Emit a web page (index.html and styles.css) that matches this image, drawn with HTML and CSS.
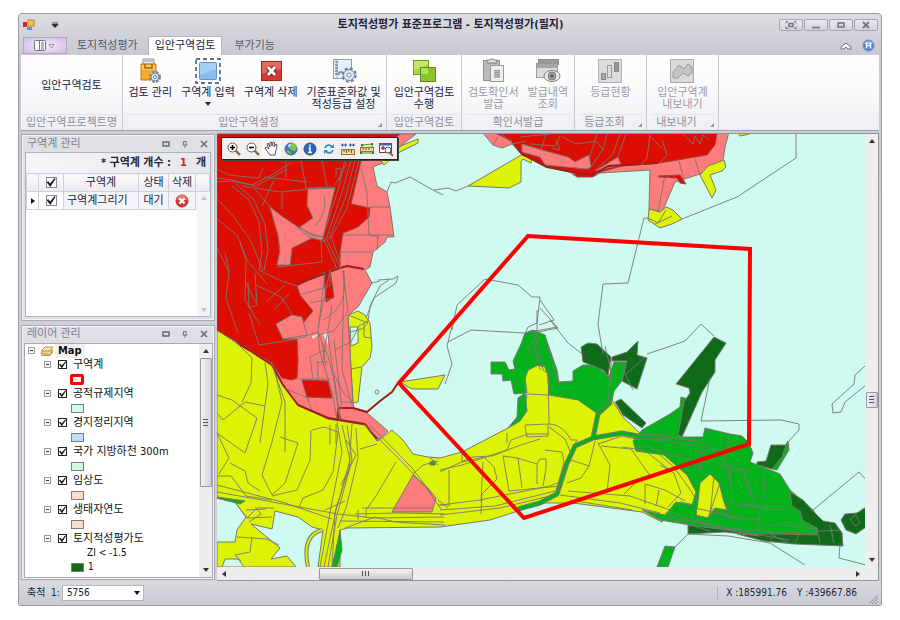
FILE: index.html
```html
<!DOCTYPE html>
<html lang="ko">
<head>
<meta charset="utf-8">
<title>토지적성평가 표준프로그램</title>
<link rel="stylesheet" href="styles.css">
</head>
<body>
<div class="window">
  <header class="titlebar">
    <div class="quick">
      <svg width="12" height="12" viewBox="0 0 12 12"><rect x="5" y="1" width="6" height="6" fill="#f6c544" stroke="#b98a1c"/><rect x="0" y="3" width="4" height="5" fill="#cf2a20"/><rect x="4" y="8" width="5" height="3" fill="#5a93dd"/></svg>
      <button class="plain" aria-label="빠른 실행 설정"><svg width="8" height="6" viewBox="0 0 8 6"><path d="M1 1h6M1 2.500h6L4 5.500z" stroke="#223" fill="#223" stroke-width=".8"/></svg></button>
    </div>
    <h1 class="title">토지적성평가 표준프로그램 - 토지적성평가(필지)</h1>
    <div class="winbuttons">
      <button aria-label="전체 화면"><svg width="12" height="8" viewBox="0 0 12 8"><path d="M1 2.500V.5h2M9 .5h2v2M11 5.500v2H9M3 7.500H1v-2" fill="none" stroke="#70737f"/><rect x="4" y="2.500" width="4" height="3" fill="none" stroke="#70737f" stroke-width="1.500"/></svg></button>
      <button aria-label="최소화"><svg width="12" height="8" viewBox="0 0 12 8"><path d="M2 6.500h8" stroke="#7c7f8b" stroke-width="2"/></svg></button>
      <button aria-label="최대화"><svg width="12" height="8" viewBox="0 0 12 8"><rect x="3" y="2" width="6" height="4" fill="none" stroke="#70737f" stroke-width="1.600"/></svg></button>
      <button aria-label="닫기"><svg width="12" height="8" viewBox="0 0 12 8"><path d="M3 1l6 6M9 1L3 7" stroke="#70737f" stroke-width="1.800"/></svg></button>
    </div>
  </header>

  <nav class="tabs">
    <button class="filebtn" aria-label="파일 메뉴"><svg width="22" height="12" viewBox="0 0 22 12"><rect x=".5" y=".5" width="11" height="10" rx="1" fill="#fafafa" stroke="#777"/><path d="M5.500 1v10M7 3h3M7 5h3M7 7h3M7 9h3" stroke="#777"/><path d="M15 4.500h5L17.500 8z" fill="#fff" stroke="#777" stroke-width=".8"/></svg></button>
    <button class="tab">토지적성평가</button>
    <button class="tab active">입안구역검토</button>
    <button class="tab">부가기능</button>
    <span class="spacer"></span>
    <button class="plain" aria-label="리본 최소화"><svg width="12" height="8" viewBox="0 0 12 8"><path d="M1 5l5-4 5 4v2H8L6 5 4 7H1z" fill="#fff" stroke="#6c6f7b"/></svg></button>
    <button class="plain help" aria-label="도움말"><svg width="13" height="13" viewBox="0 0 13 13"><circle cx="6.500" cy="6.500" r="5.500" fill="#4a7fd4" stroke="#7f8fb5"/><path d="M2 5a5 5 0 0 1 9 0z" fill="#a5c6f2"/><path d="M4.500 3.500v6M8.500 3.500v6M4.500 6.500h4" stroke="#fff" stroke-width="1.600"/></svg></button>
  </nav>

  <section class="ribbon">
    <div class="group g-project">
      <div class="items"><span class="project">입안구역검토</span></div>
      <div class="caption">입안구역프로젝트명</div>
    </div>
    <div class="group g-setting">
      <div class="items">
        <button class="tool"><svg width="24" height="26" viewBox="0 0 24 26"><path d="M5 1h11v5H5z" fill="#f2f4f8" stroke="#858b98"/><path d="M6 3h9" stroke="#858b98"/><path d="M3 6h15v16H3z" fill="#f4a929" stroke="#c07b12"/><path d="M4 7h13v5H4z" fill="#f9c763"/><path d="M7 6v4h7V6" fill="none" stroke="#a8640b" stroke-width="1.500"/><circle cx="17" cy="19" r="5" fill="#eef2f8" stroke="#77849c" stroke-width="2" stroke-dasharray="2.500 1.500"/><circle cx="17" cy="19" r="4" fill="#dfe6f0" stroke="#77849c"/><circle cx="17" cy="19" r="1.500" fill="#fff" stroke="#77849c"/></svg><span>검토 관리</span></button>
        <button class="tool"><svg width="26" height="26" viewBox="0 0 26 26"><rect x="1" y="1" width="24" height="24" fill="none" stroke="#2f4666" stroke-width="1.400" stroke-dasharray="4 3"/><rect x="4.500" y="4.500" width="17" height="17" rx="1" fill="#8bbcf0" stroke="#5f94cf"/><path d="M5 5h16v6L5 17z" fill="#a9cff7"/></svg><span>구역계 입력</span><svg class="caret" width="6" height="4" viewBox="0 0 6 4"><path d="M0 0h6L3 4z" fill="#223"/></svg></button>
        <button class="tool"><svg width="24" height="26" viewBox="0 0 24 26"><rect x="2.500" y="3.500" width="20" height="19" fill="#d2392f" stroke="#a8221b"/><path d="M3 4h19v7L3 16z" fill="#e2685d"/><path d="M9 9l7 8M16 9l-7 8" stroke="#7d1712" stroke-width="5"/><path d="M9 9l7 8M16 9l-7 8" stroke="#fff" stroke-width="3"/></svg><span>구역계 삭제</span></button>
        <button class="tool"><svg width="26" height="26" viewBox="0 0 26 26"><rect x="2.500" y="1.500" width="18" height="19" fill="#eaf0f9" stroke="#8a9cb8"/><path d="M6 2v18" stroke="#9db0cc"/><path d="M4 4h3M4 7h3M4 10h3M4 13h3M4 16h3M8 17v-3h3" stroke="#415a82" fill="none"/><circle cx="18" cy="17" r="6.500" fill="none" stroke="#7586a3" stroke-width="2.500" stroke-dasharray="3 2.100"/><circle cx="18" cy="17" r="5.500" fill="#dde6f3" stroke="#7586a3"/><circle cx="18" cy="17" r="2" fill="#fff" stroke="#7586a3"/></svg><span>기준표준화값 및<br>적성등급 설정</span></button>
      </div>
      <div class="caption launch">입안구역설정</div>
    </div>
    <div class="group g-review">
      <div class="items">
        <button class="tool"><svg width="26" height="26" viewBox="0 0 26 26"><rect x="2.500" y="2.500" width="15" height="14" fill="#a9d63f" stroke="#6f9d1f"/><path d="M3 3h14v4L3 12z" fill="#c3e56d"/><rect x="9.500" y="9.500" width="15" height="14" fill="#8cc32b" stroke="#5d8a17"/><path d="M10 10h7v6h-7z" fill="#b5dc5c"/></svg><span>입안구역검토<br>수행</span></button>
      </div>
      <div class="caption">입안구역검토</div>
    </div>
    <div class="group g-issue">
      <div class="items">
        <button class="tool" disabled><svg width="24" height="26" viewBox="0 0 24 26"><rect x="2.500" y="2.500" width="16" height="20" fill="#b9b9b9" stroke="#909090"/><path d="M6 5V2h3l1-1h2l1 1h3v3z" fill="#ddd" stroke="#808080"/><rect x="9.500" y="7.500" width="13" height="16" fill="#eee" stroke="#999"/><rect x="13" y="12" width="6" height="8" fill="#bbb"/><path d="M13 12.500h6M13 14.500h6M13 16.500h6M13 18.500h6" stroke="#999"/></svg><span>검토확인서<br>발급</span></button>
        <button class="tool" disabled><svg width="26" height="26" viewBox="0 0 26 26"><rect x="3.500" y="1.500" width="20" height="5" fill="#9c9c9c" stroke="#888"/><rect x="1.500" y="5.500" width="21" height="14" fill="#dcdcdc" stroke="#999"/><path d="M2 6h20v4H2z" fill="#a5a5a5"/><ellipse cx="17" cy="18" rx="8" ry="5.500" fill="#eee" stroke="#808080"/><circle cx="17" cy="18" r="4" fill="#aaa" stroke="#777"/><circle cx="17" cy="18" r="1.800" fill="#555"/></svg><span>발급내역<br>조회</span></button>
      </div>
      <div class="caption">확인서발급</div>
    </div>
    <div class="group g-grade">
      <div class="items">
        <button class="tool" disabled><svg width="26" height="26" viewBox="0 0 26 26"><rect x="1.500" y="1.500" width="23" height="23" fill="#dcdcdc" stroke="#b3b3b3"/><rect x="4.500" y="15.500" width="4" height="6" fill="#aaa" stroke="#888"/><rect x="10.500" y="7.500" width="4" height="12" fill="#ddd" stroke="#999"/><rect x="17.500" y="4.500" width="4" height="9" fill="#999" stroke="#888"/></svg><span>등급현황</span></button>
      </div>
      <div class="caption launch">등급조회</div>
    </div>
    <div class="group g-export">
      <div class="items">
        <button class="tool" disabled><svg width="26" height="26" viewBox="0 0 26 26"><rect x="1.500" y="1.500" width="23" height="23" fill="#dadada" stroke="#aaa"/><path d="M4 20V14l6-7 5 4 4-5 4 3v6l-4 3-5-3-5 5z" fill="#c4c4c4" stroke="#999"/></svg><span>입안구역계<br>내보내기</span></button>
      </div>
      <div class="caption launch">내보내기</div>
    </div>
  </section>

  <main class="workspace">
    <aside class="dock">
      <section class="panel zones">
        <header class="panelhead">
          <h2>구역계 관리</h2>
          <button class="plain" aria-label="최대화"><svg width="8" height="8" viewBox="0 0 8 8"><path d="M1 2h6v4H1z" fill="none" stroke="#666977" stroke-width="1.500"/></svg></button>
          <button class="plain" aria-label="고정"><svg width="8" height="8" viewBox="0 0 8 8"><path d="M2.500 1v4M5 1v4M1.500 5h5M4 5v3M2.500 1.500h3" fill="none" stroke="#777a88"/></svg></button>
          <button class="plain" aria-label="닫기"><svg width="8" height="8" viewBox="0 0 8 8"><path d="M1 1l6 6M7 1L1 7" stroke="#666977" stroke-width="1.500"/></svg></button>
        </header>
        <div class="zonebox">
          <p class="count"><span>* 구역계 개수 :</span><b>1</b><span>개</span></p>
          <div class="gridwrap">
            <table class="grid">
              <colgroup><col class="c1"><col class="c2"><col><col class="c4"><col class="c5"><col class="c6"></colgroup>
              <thead><tr><th></th><th><input class="check" type="checkbox" checked aria-label="모두 선택"></th><th>구역계</th><th>상태</th><th>삭제</th><th></th></tr></thead>
              <tbody><tr><td class="mark"><svg width="4" height="6" viewBox="0 0 4 6"><path d="M0 0l4 3-4 3z" fill="#111"/></svg></td><td class="sel"><input class="check" type="checkbox" checked aria-label="구역계그리기 선택"></td><td class="name">구역계그리기</td><td>대기</td><td><button class="plain" aria-label="구역계그리기 삭제"><svg width="14" height="14" viewBox="0 0 14 14"><circle cx="7" cy="7" r="6" fill="#d8392d" stroke="#a9332b"/><path d="M2 6a5 5 0 0 1 10 0z" fill="#e8796c"/><path d="M4.500 4.500l5 5M9.500 4.500l-5 5" stroke="#fff" stroke-width="2.200"/></svg></button></td><td class="rail"></td></tr></tbody>
            </table>
            <div class="ghostrail"><svg width="6" height="4" viewBox="0 0 6 4"><path d="M0 4l3-4 3 4z" fill="#c3c3c9"/></svg><svg width="6" height="4" viewBox="0 0 6 4"><path d="M0 0h6L3 4z" fill="#c3c3c9"/></svg></div>
          </div>
        </div>
      </section>

      <section class="panel layers">
        <header class="panelhead">
          <h2>레이어 관리</h2>
          <button class="plain" aria-label="최대화"><svg width="8" height="8" viewBox="0 0 8 8"><path d="M1 2h6v4H1z" fill="none" stroke="#666977" stroke-width="1.500"/></svg></button>
          <button class="plain" aria-label="고정"><svg width="8" height="8" viewBox="0 0 8 8"><path d="M2.500 1v4M5 1v4M1.500 5h5M4 5v3M2.500 1.500h3" fill="none" stroke="#777a88"/></svg></button>
          <button class="plain" aria-label="닫기"><svg width="8" height="8" viewBox="0 0 8 8"><path d="M1 1l6 6M7 1L1 7" stroke="#666977" stroke-width="1.500"/></svg></button>
        </header>
        <div class="treebox">
          <div class="tree">
            <div class="root"><button class="exp" aria-label="접기"></button><svg width="14" height="12" viewBox="0 0 14 12"><path d="M1 8l4-3h8l-3 4H1zM1 10.500h9l3-4" fill="#f3d28d" stroke="#b07f2b" stroke-width=".8"/><path d="M1 6l4-4h8l-3 4z" fill="#f9e3b2" stroke="#b07f2b" stroke-width=".8"/></svg><strong>Map</strong></div>
            <ul>
              <li><div class="row"><button class="exp" aria-label="접기"></button><label><input class="box" type="checkbox" checked>구역계</label></div><div class="legend"><i class="swatch zone"></i></div></li>
              <li><div class="row"><button class="exp" aria-label="접기"></button><label><input class="box" type="checkbox" checked>공적규제지역</label></div><div class="legend"><i class="swatch aqua"></i></div></li>
              <li><div class="row"><button class="exp" aria-label="접기"></button><label><input class="box" type="checkbox" checked>경지정리지역</label></div><div class="legend"><i class="swatch blue"></i></div></li>
              <li><div class="row"><button class="exp" aria-label="접기"></button><label><input class="box" type="checkbox" checked>국가 지방하천 300m</label></div><div class="legend"><i class="swatch mint"></i></div></li>
              <li><div class="row"><button class="exp" aria-label="접기"></button><label><input class="box" type="checkbox" checked>임상도</label></div><div class="legend"><i class="swatch peach"></i></div></li>
              <li><div class="row"><button class="exp" aria-label="접기"></button><label><input class="box" type="checkbox" checked>생태자연도</label></div><div class="legend"><i class="swatch peach"></i></div></li>
              <li><div class="row"><button class="exp" aria-label="접기"></button><label><input class="box" type="checkbox" checked>토지적성평가도</label></div><div class="range">ZI &lt; -1.5</div><div class="legend"><i class="swatch dark"></i>1</div></li>
            </ul>
          </div>
          <div class="vbar"><svg class="arrow" width="6" height="4" viewBox="0 0 6 4"><path d="M0 4l3-4 3 4z" fill="#333"/></svg><div class="thumb treethumb"><svg width="5" height="7" viewBox="0 0 5 7"><path d="M0 .5h5M0 3.500h5M0 6.500h5" stroke="#555"/></svg></div><span class="spacer"></span><svg class="arrow" width="6" height="4" viewBox="0 0 6 4"><path d="M0 0h6L3 4z" fill="#333"/></svg></div>
        </div>
      </section>
    </aside>

    <section class="mapview">
      <div class="canvas">
        <svg class="map" viewBox="217 134 649 433" preserveAspectRatio="xMinYMin slice" role="img" aria-label="지도">
          <g stroke="#7b7672" stroke-width="1" stroke-linejoin="round">
            <g fill="#dcf404">
              <path d="M217 330L237 343 252 352 272 365 283 385 298 405 328 419 365 425 378 441 392 430 403 440 413 454 428 457 440 458 462 452 508 428 520 421 525 411 527 393 525 378 528 370 537 365 545 367 548 375 549 394 578 399 598 413 612 400 623 417 642 435 637 445 670 449 700 490 695 505 680 502 669 515 662 522 642 512 573 503 540 503 518 511 490 520 440 527 348 528 340 530 340 567 318 567 323 530 312 527 298 517 275 511 272 529 251 524 280 548 271 559 287 556 296 567H217Z"/>
              <path d="M348 315l10-4 7 4 5 8 2 24-2 11-8 9-4 35-5 1-2-34z"/>
              <path d="M400 382l45-7-7 14h-26z"/>
              <path d="M398 147l20-8v4l-20 10-14 12-6-5z"/>
              <path d="M468 186l55-32 9 4-1 5-8-4-2 3v20l-12 6z"/>
            </g>
            <path fill="#cefaf0" d="M216 498l19 4 11 15-9 13-2 12h-19zM225 559h13l6 8h-22zM350 327h8v16l-7 3z"/>
            <path fill="none" stroke-width="4" d="M322 530c-15 4-18 18-14 37"/>
            <path fill="none" stroke="#dcf404" stroke-width="2" d="M322 530c-15 4-18 18-14 37"/>
            <path fill="#ff7c7c" d="M217 134H416L398 148 380 160 383 163 373 167 377 186 387 192 390 207 394 237 387 237 385 242 373 252 370 267 365 270 372 283 358 307 348 315 351 369 353 403 354 408 367 413 388 431 377 441 365 425 338 420 328 418 298 405 283 385 272 365 252 352 237 343 217 330Z"/>
            <path fill="#ff7c7c" d="M413 475l14 12 9 11-4 14h-40zM483 133l10 12 9 3 10-4 10 11 13 5 12 7 23 5 5 4h20l5-3 50-3-1 39 13 3 13-30 25-8 23-14 2-13 4-15z"/>
            <g fill="#dc0e02" stroke="#8d4a45">
              <path d="M217 134H400L372 155 361 161 351 204 370 208 369 217 358 227 343 233 340 252 340 267 330 270 334 297 326 302 324 272 297 286 300 295 313 311 303 323 292 315 277 325 283 339 297 339 298 360 297 378 292 380 282 378 272 363 252 351 237 342 217 330Z"/>
              <path d="M302 380l26 1 4 17-25-1zM338 408l3 11-5 1z"/>
              <path d="M495 133l17 8 10 13 25 13 25 4 5 6h16l4-4 25-7 38-3 47-8 8-10 2-12zM658 176l22-1 6 9-6-1-3-5-18-1z"/>
            </g>
            <path fill="#ff7c7c" d="M308 189l27-1-12 49-13-2-10-8 13-9-6-13zM270 207l13 10 15 10 14 7 11 3-1 3-10-2-20 10-2 17h-13l3-14-2-16zM522 144l20 6 26 7 7 5 14-7 2 12-4 2-42-4-5-8-18-5zM618 157l3 8-26 6 13-8zM276 324l7 15 24-4-5-18-10-2z"/>
            <path fill="#cefaf0" stroke="none" d="M312 336l7-2-6 5zM323 334l5-3v14z"/>
            <g fill="#dcf404">
              <path d="M649 209l11 3 6-5 7 3 9 9-10 5-12 4-12-8zM700 175l8-9 16-6 2 7-4 4-12 4 6 15-4 8zM738 133h15l-8 2-5 1z"/>
            </g>
            <g fill="#04b21c">
              <path d="M525 333l8-3 12 5 5 15 7 20 2 12 14-1v-10l10-6h13l13 12 5-15h13l-2 15-11 14-2 10-14 13-20-14-29-5-1-19-3-10-7-1-10 5-3 8 1 15-12 1-3-14-8 1-1-7h-11v-12h14l4 8 6-1-2-8 8-17z"/>
              <path d="M518 398l7-5 2 18-7 10-12 7 9-11z"/>
              <path d="M642 430l28-16 10-7 1-10 11 3-13 37 24 0 2-9 25 6 12 2 7 7 4 10-3 9 13 5 17 7 10 16 23 20 7 10 20 10 2 13h-42l-30-3-43-10-37-5-30-5-18-10 23 5 11-13 16 3 4-13-9-17-23-20-28-4-3-10z"/>
              <path d="M665 546l10 1-7 20h-11zM788 441l1 9-12 20-5-1zM430 462l5-1v4h-5zM340 530l2 20-5 17h-5l4-18z"/>
              <path d="M217 497l28 4-5 3-23-6z"/>
            </g>
            <g fill="#0f6a1a">
              <path d="M581 347l7-4 9 1 14 13-3 19-5-6-12-5-8-3zM612 357l15-5 11-11-1 14 10 3-10 31-15-8 5-20h-15zM615 402l6-3 25 24-4 5-19-13zM714 337l12 6-11 17v12l-13 20-20 45-4-2 6-33 6-9-1-5-13-4zM771 445h15l-4 12-10 12-15-4v-3l9-1z"/>
              <path d="M790 492l13 8 10 11 10 10 12 2 7 10 1 13-49-2-30-3-27-7h40l40 1v-7l-14-7-3-10-8-5zM688 525l39 5 32 6-34-4-37 2zM845 514l12-1 9-6v20l-10 7-10-4-5-10z"/>
            </g>
            <path fill="#dcf404" d="M700 483l10-9 9 9 5 19 3 8-12-2-7 10-12-3 2-14z"/>
            <g fill="none" stroke-width="5"><path d="M611 402l-13 12-5 24-18 8-8 17-10 31-17 9-22 6M593 438l29-5 21 4 27 0"/></g>
            <g fill="none" stroke="#04b21c" stroke-width="3"><path d="M611 402l-13 12-5 24-18 8-8 17-10 31-17 9-22 6M593 438l29-5 21 4 27 0"/></g>
            <path fill="none" stroke="#a01c18" stroke-width="2" d="M398 383l-6 9-12 9-13 11-14-4h-15M237 343l15 9 20 13 11 20 15 20 30 13 37 6 12 15M512 141l10 13 25 13 25 5 20 3 16-9 50-3M297 284l40-15 10-3 17 3"/>
            <g fill="none" stroke-width=".9">
              <!-- western parcels -->
              <path d="M217 178l15 2 20 5 18-9 22-14M217 182l14-1 25 5 31-17M232 186l17 14 10 22 3 30-3 18 20 10 18 6M236 184l18 16 11 24 3 26-4 20M242 186l38 6 29-3M270 207l-15-18M282 192v17M217 199l17 18 17 24 12 30M217 219l20 16 10 25 20 24M217 248l12 24-3 26 12 35M229 272l-4-20M240 242l6 18-1 40 15 25M246 283l10 20M255 273l2 32-8 3-1-26M256 285l25 12 8 12 3 6M267 301l18-16M275 309l14-15M259 345l38-6M249 313l10 32M263 168l-4 10-30-3-12-6M286 160v18M301 160l5 28 29-1M264 177l43 5M322 160l5 27M338 181l3-4v-9l-5 1v8M277 267l45-5-1-22M297 227l12 10 17 5M262 206l12-26"/>
              <path d="M345 160l-7 30-15 47M351 160l-9 32-16 48M355 160l-9 36-17 43M359 160l-12 48-16 30M323 237l14 32M326 238l15 31M331 237l9 25M361 168l6 25 2 42 10 2M370 207h20M343 235h50M340 252h32M378 235l-1 15M335 185l12-22"/>
              <path d="M324 196c3 10-2 25-10 30M325 272l-7 60 2 20 12 40 5 27M330 270l-12 58M343 271l5 40-14 20-16 4M344 270l-2 100 10 35M332 305l-10 60M334 340l8 70M297 339l21-7 10 24 7 26 5 36M335 350l16-8 8-16 9-5 2-15 10-20 10-7M310 357l15-7M310 357l3 22M316 362h12M318 362v18M298 379h32M307 397l5 13M284 388l24 10M330 270v16l-30 9M310 303l24-5M343 270c5 25-2 40-20 50M322 342l4 24M328 335l8 60 4 25M333 372l10 20 9 10h-12"/>
              <path d="M348 315l20 8-6 6-12 3M351 369l10-2M364 323v14l7 1M366 318l8-20 22-15 2-7-5 3-15 1M372 283l8-2M387 192l4-10 4 1 15-6 23 13 10 5M434 190l14-2 8 3 12-5"/>
              <!-- southern fields -->
              <path d="M217 395l15 5 25 18-12 35-28-20M217 413l6 7 22-18 20 4M237 343l15 15-1 25-9 19M265 363l3 20-8 60M275 372l7 30-10 40-10 33 10 20M271 362l14 40 0 50M280 437l18 6-13 40-13 12M311 430l-1 30-13 30-25 6M312 430l12-3 14 5-5 40-10 18-20 8-4 9M217 433l12 25-10 16M217 476l14 0 15 20 26 4M230 463l15 8 3 12 12 8M217 492l50 9 60 11 10 2M217 485l65 17 50 17M246 510l20-1M235 502l12 16 10-10 17 0M247 518l25-1M255 507l6 7-12 8M237 537l30 2 12 6M252 537l-2 15-15 3M235 555l6 6"/>
              <path d="M337 422l5 30-10 50-12 65M342 425l8 35-14 50-12 57M347 425l5 35-15 55-9 52M352 424l-3 45-14 43-3 55M356 428l2 30-12 50-8 20M336 424v20M330 425v20M346 440l10 15-15 30M325 510l20-9M338 514l36 4 70-1M355 514l42-1 48 1M362 508h70M358 510v10M366 510v8M345 528l30-11 20 5 50 3M340 521l104 1M360 449l17-5M365 425l40 40 22 24 14 20M370 425l42 43 19 25M396 462l-20 34-10 14M413 474l10-9 15-4M438 465l-8-7M438 500l10 8M438 505h12"/>
              <path d="M440 470l22-5 45-15 4-10 17-6 20 0M440 472l32-15 20-1 26-10 22-7M449 470v34M440 505l40-5 70-14 10-4M440 510l55-4 60-15M440 515l60-7 50-12M462 452v10l22-5 10 10 3 12-15 15-1 20M483 462l-2 40M503 456l6 35 51-5M518 458l4 30M503 456l14 2 20 6 3-5h6v10l-3 17M537 464v20M525 425l23-1v12l-21 1-2-10zM549 427l16 12 7 17-15 36M548 372l1 52M528 394l20 1M507 433v10M549 424c10 0 18 8 22 16h6l-3 6M545 450l17 2 2 10-8 30M571 460l18 6 6-25M589 466l-8 12-14 5M598 443l12 22-3 28M601 446l30 3 20 28-12 2-15 15M622 447l22 3 27 21M568 491l62 5 40 14M560 495l60 8 40 10M570 500l62 10M645 484v20M659 490l-3 16M645 484l20 6 20 11M660 455l14 12 17 24 7 12M660 465l14 8 7 20-13 14M640 445l60 17M598 444l24-8 18 4"/>
              <!-- eastern forest -->
              <path d="M643 433l57 9 20 9 10 20 2 30M643 439l53 6M698 446v24M703 450l-3 20M703 450l22 0-2 14 28 8M730 434l-5 18M717 464l10 6h15l12 30-8 6-15-4M763 468l2 20-4 18-10-1M744 472l8 25M760 508h30M742 504l18 4-2 18M710 508l20 10 30 2M728 502v15M665 513l60 15 60 5 55-3M680 518l50 12 60 10M665 517l45 14M695 508l45 10M763 526l22-2 30 5M800 533l-5 10M817 528l3 15M830 525l4 18M769 534l20 9M770 540l8-7M720 483l-12 35M714 476l-4 40"/>
              <path d="M537 333l-3 12 6 25M535 330l8 40 6 4M545 338l15 50M527 345l8 15M605 346l6 25-3 30M611 357v30M618 360l15 30M625 375l20-18M540 300l14 20-15 5M537 310v20l-7 5"/>
              <!-- northern parcels -->
              <path d="M502 134l10 10 14-3M493 145l5-8M520 137l30-3M530 144l25 2 5-10M541 150l5-16M552 148l8 2-4-10M561 136l15 8 20-3 8 10M597 134l-8 25M607 134l-4 15-12 18M620 134l-7 20-17 16M626 134l-8 22M650 134l-3 24-7 8M650 136l12 12M662 140l5 15-7 8M683 134l10 10 2-8 5 8 3-9 6 5M679 161l5 18M695 159l5 16M664 180l-6 32M669 175l-7 8M648 218l10 5 8-13M655 224l17-8"/>
              <path d="M796 134v24l-59 39-55 22M648 218h-4l-16 65-25 1-5 40 5 30M452 330l5-25 28-26 33 6 14 12h8l-3 26-9 4-3 7M540 308l18 20-20 4M452 326l-5 20 5 18-7 20M448 342l23-12 54 3 32-6M550 320l18 23 13 10M647 354l18-6 20-7 16-17 13 12M710 378l-9 43 80-1 18 4v6l-11 12M866 365l-11 10-1 9-22 20 1 9 8-1 4-10 21-17M813 510l46-38 7 8M688 534l40 2 42 7 35 22M688 534l-14 14M840 543l-1 15 27 7M850 519l6-4 4 8-5 3z"/>
              <circle cx="377" cy="392" r="2"/>
            </g>
          </g>
          <path d="M528 236L750 249 749 444 524 518 399 383Z" fill="none" stroke="#f00" stroke-width="4"/>
        </svg>
        <div class="maptools">
          <button aria-label="확대"><svg width="16" height="16" viewBox="0 0 16 16"><path d="M9 9l5 5" stroke="#8a6548" stroke-width="2.400"/><circle cx="6.500" cy="6.500" r="4.500" fill="#fff" stroke="#555"/><path d="M4 6.500h5M6.500 4v5" stroke="#000" stroke-width="1.600"/></svg></button>
          <button aria-label="축소"><svg width="16" height="16" viewBox="0 0 16 16"><path d="M9 9l5 5" stroke="#8a6548" stroke-width="2.400"/><circle cx="6.500" cy="6.500" r="4.500" fill="#fff" stroke="#555"/><path d="M4 6.500h5" stroke="#000" stroke-width="1.600"/></svg></button>
          <button class="pressed" aria-label="이동"><svg width="16" height="16" viewBox="0 0 16 16"><path d="M6 14L3 10 1 7l1-1 3 2-2-5 1-1 2 4V1.500l1.500-.5L8 5l1-4 1.500.5L10 6l2-3 1 .5L12 9l-1 5z" fill="#fff" stroke="#444" stroke-width=".9"/></svg></button>
          <button aria-label="전체 보기"><svg width="16" height="16" viewBox="0 0 16 16"><circle cx="8" cy="8" r="6" fill="#3f78c4" stroke="#51637f"/><path d="M6 3l5-1 3 4-2 4-4-1-2-3zM3 9l4 1 1 3-3-1z" fill="#7fc843"/><path d="M5 4l3-1-2 4z" fill="#dff0ff"/></svg></button>
          <button aria-label="속성"><svg width="16" height="16" viewBox="0 0 16 16"><circle cx="8" cy="8" r="6" fill="#2c62bd" stroke="#274b87"/><path d="M8 3.500v2M6.500 7H8v4M6 11.500h4" stroke="#fff" stroke-width="1.500" fill="none"/></svg></button>
          <button aria-label="새로 고침"><svg width="16" height="16" viewBox="0 0 16 16"><path d="M4 7c1-3.500 5-3.500 7-1.500M12 9c-1 3.500-5 3.500-7 1.500" stroke="#3a8cc8" stroke-width="1.800" fill="none"/><path d="M13 3v4H9zM3 13V9h4z" fill="#3a8cc8"/></svg></button>
          <button aria-label="거리 측정"><svg width="16" height="16" viewBox="0 0 16 16"><path d="M2 4h4M10 4h4" stroke="#2858a8"/><path d="M1 4l2-2v4zM7 4L5 2v4zM9 4l2-2v4zM15 4l-2-2v4z" fill="#2858a8"/><rect x="1.500" y="8.500" width="13" height="5" fill="#f5d9a4" stroke="#a56d25"/><path d="M4 9v2M6.500 9v3M9 9v2M11.500 9v3" stroke="#865416"/></svg></button>
          <button aria-label="면적 측정"><svg width="16" height="16" viewBox="0 0 16 16"><path d="M3 4l10-1 1 9H2z" fill="#d8efb8" stroke="#4f9a33"/><path d="M2 3h2v2H2zM12 2h2v2h-2zM1 11h2v2H1zM13 11h2v2h-2z" fill="#3b7b2c"/><rect x="1.500" y="6.500" width="13" height="4" fill="#f5d9a4" stroke="#a56d25"/><path d="M4 7v2M7 7v2M10 7v2" stroke="#865416"/></svg></button>
          <button aria-label="영역 검색"><svg width="16" height="16" viewBox="0 0 16 16"><rect x="1.500" y="2.500" width="12" height="9" fill="#fff" stroke="#456"/><path d="M1 3.500h13" stroke="#3d69a8" stroke-width="2"/><path d="M5 5v4M3 7h4" stroke="#c22" stroke-width="1.500"/><path d="M11 11l4 4" stroke="#8a6548" stroke-width="2"/><circle cx="10" cy="9" r="3" fill="#e8f4ff" stroke="#555"/></svg></button>
        </div>
      </div>
      <div class="vbar mapv"><svg class="arrow" width="6" height="4" viewBox="0 0 6 4"><path d="M0 4l3-4 3 4z" fill="#333"/></svg><span class="before"></span><div class="thumb mapthumb"><svg width="5" height="7" viewBox="0 0 5 7"><path d="M0 .5h5M0 3.500h5M0 6.500h5" stroke="#555"/></svg></div><span class="after"></span><svg class="arrow" width="6" height="4" viewBox="0 0 6 4"><path d="M0 0h6L3 4z" fill="#333"/></svg></div>
      <div class="hbar"><svg width="4" height="6" viewBox="0 0 4 6"><path d="M4 0v6L0 3z" fill="#333"/></svg><span class="before"></span><div class="thumb hthumb"><svg width="7" height="5" viewBox="0 0 7 5"><path d="M.5 0v5M3.500 0v5M6.500 0v5" stroke="#555"/></svg></div><span class="after"></span><svg width="4" height="6" viewBox="0 0 4 6"><path d="M0 0l4 3-4 3z" fill="#333"/></svg></div>
      <div class="corner"></div>
    </section>
  </main>

  <footer class="status">
    <label for="scale">축척&nbsp; 1:</label>
    <span class="combo"><select id="scale"><option>5756</option></select></span>
    <span class="spacer"></span>
    <span class="coords"><span>X :185991.76</span><span>Y :439667.86</span></span>
    <svg class="grip" width="9" height="9" viewBox="0 0 9 9"><path d="M0 9l9-9M3 9l6-6M6 9l3-3" stroke="#8d8f9a"/></svg>
  </footer>
</div>
</body>
</html>
```
FILE: styles.css
```css
* { box-sizing: border-box; }

body {
  margin: 0;
  padding: 13px 18px 14px;
  height: 100vh;
  min-height: 420px;
  display: flex;
  background: #fff;
  color: #23233a;
  font: 11px/14px "DejaVu Sans Condensed", "Noto Sans CJK KR", sans-serif;
}

button, select, input { font: inherit; color: inherit; margin: 0; }
button { padding: 0; border: 0; background: none; }
svg { display: block; flex: none; }
h1, h2, p, ul { margin: 0; padding: 0; }
.spacer { flex: 1; }
.plain { display: inline-flex; }

.window {
  flex: 1;
  min-width: 0;
  display: flex;
  flex-direction: column;
  border: 1px solid #9a9ba6;
  border-radius: 4px 4px 2px 2px;
  background: linear-gradient(#dddee3, #c7c8d0 40px, #cfd0d8 200px);
}

/* title bar and tabs */
.titlebar {
  display: grid;
  grid-template-columns: 1fr auto 1fr;
  align-items: center;
  height: 22px;
  padding: 0 3px 0 4px;
}
.quick { display: flex; align-items: center; gap: 16px; }
.title { font-size: 11px; line-height: 16px; font-weight: 700; }
.winbuttons { display: flex; justify-content: flex-end; gap: 1px; }
.winbuttons button {
  width: 24px;
  height: 12px;
  display: flex;
  align-items: center;
  justify-content: center;
  border: 1px solid #a4a5b0;
  border-radius: 2px;
  background: linear-gradient(#e9eaee, #d3d4db);
}
.tabs { display: flex; align-items: stretch; height: 19px; padding: 0 6px 0 4px; color: #55576a; }
.filebtn {
  width: 44px;
  margin: 1px 0 1px;
  display: flex;
  align-items: center;
  justify-content: center;
  border: 1px solid #b7a4cb;
  background: radial-gradient(ellipse at center, #f4eef9, #d3b9e4);
}
.tab { padding: 0 9px; line-height: 18px; border: 1px solid transparent; border-bottom: 0; }
.tab.active { background: #fff; color: #23233a; border-color: #b4b5bf; padding: 0 6px; }
.tab.active + .tab { padding: 0 11px; }
.tabs .plain { align-items: center; }
.tabs .help { margin-left: 10px; }

/* ribbon */
.ribbon {
  display: flex;
  flex: none;
  height: 76px;
  margin: 0 2px;
  background: linear-gradient(#fff, #fbfbfc 40%, #eeeff3);
  border-bottom: 1px solid #9fa1ac;
}
.group { display: flex; flex-direction: column; border-right: 1px solid #c6c7cf; }
.g-project { min-width: 102px; }
.g-setting { min-width: 264px; }
.g-review { min-width: 75px; }
.g-issue { min-width: 113px; }
.g-grade, .g-export { min-width: 72px; }
.items { flex: 1; display: flex; justify-content: center; gap: 9px; padding-top: 3px; }
.project { align-self: center; }
.tool { display: flex; flex-direction: column; align-items: center; line-height: 12px; white-space: nowrap; }
.tool > span { margin-top: 3px; }
.tool:disabled { color: #9b9ca6; }
.caret { margin-top: 3px; }
.caption {
  position: relative;
  height: 16px;
  margin: 0 4px;
  border-top: 1px solid #e2e3e8;
  line-height: 16px;
  text-align: center;
  color: #8d8e9b;
}
.caption.launch { padding-right: 12px; }
.caption.launch::after {
  content: "";
  position: absolute;
  right: 0;
  bottom: 3px;
  border: 2px solid transparent;
  border-right-color: #8d8f9a;
  border-bottom-color: #8d8f9a;
}

/* docked panels */
.workspace { flex: 1; min-height: 0; display: flex; gap: 2px; padding: 2px 2px 0; }
.dock { flex: 0 0 194px; display: flex; flex-direction: column; gap: 4px; padding: 1px 0; }
.panel { display: flex; flex-direction: column; border: 1px solid #a9aab5; background: #dfe0e5; box-shadow: inset 0 0 0 1px #f3f3f6; }
.zones { flex: 186 1 0; min-height: 0; }
.layers { flex: 255 1 0; min-height: 0; }
.panelhead { display: flex; align-items: center; gap: 11px; height: 17px; padding: 0 6px 0 5px; }
.panelhead h2 { flex: 1; font-size: 11px; line-height: 16px; font-weight: 400; color: #7d7f8c; }
.zonebox { flex: 1; min-height: 0; display: flex; flex-direction: column; margin: 0 3px 3px; border: 1px solid #b1b2bc; }
.count {
  display: flex;
  justify-content: flex-end;
  gap: 9px;
  height: 20px;
  line-height: 20px;
  padding-right: 4px;
  font-weight: 700;
  background: linear-gradient(90deg, #f6f6f8, #e6e7eb);
}
.count b { color: #d42020; }
.gridwrap { flex: 1; position: relative; background: #fff; }
.grid { width: 100%; table-layout: fixed; border-collapse: collapse; text-align: center; }
.grid th, .grid td { height: 18px; padding: 0; font-weight: 400; border: 1px solid #d0d1d8; line-height: 14px; }
.grid th { background: linear-gradient(#fafafb, #ececf0); }
.grid td { background: #f3f4f7; }
.grid td.mark { background: #fff; padding-left: 4px; }
.grid td.sel { background: #fff; }
.grid td.name { text-align: left; padding-left: 3px; }
.grid td.rail { border: 0; background: #f4f4f6; }
.c1 { width: 12px; }
.c2 { width: 25px; }
.c4 { width: 30px; }
.c5 { width: 27px; }
.c6 { width: 14px; }
.grid .plain { vertical-align: middle; }
.ghostrail {
  position: absolute;
  top: 19px;
  right: 0;
  bottom: 0;
  width: 13px;
  padding: 4px 0;
  display: flex;
  flex-direction: column;
  align-items: center;
  justify-content: space-between;
  background: #f4f4f6;
}

.check, .box { appearance: none; display: inline-block; vertical-align: middle; flex: none; background: #fff; border: 1px solid #888b97; width: 11px; height: 11px; }
.box { width: 9px; height: 9px; border-color: #222; }
.check:checked::before, .box:checked::before {
  content: "";
  display: block;
  width: 100%;
  height: 100%;
  background: #1a1a24;
  clip-path: polygon(0 45%, 20% 35%, 40% 62%, 90% 0, 100% 12%, 42% 100%);
}

/* layer tree */
.treebox { flex: 1; min-height: 0; display: flex; margin: 0 1px 1px 2px; border: 1px solid #a6a8b3; background: #fff; }
.tree { flex: 1; overflow: hidden; color: #111; }
.tree strong { font-size: 11px; padding: 0 3px; background: #f1f1f1; }
.tree ul { list-style: none; padding-left: 17px; }
.root, .row { display: flex; align-items: center; height: 14px; padding-left: 3px; }
.root { gap: 5px; }
.row { gap: 7px; padding-left: 2px; }
.root strong { margin-left: -4px; }
.row label { display: flex; align-items: center; gap: 6px; white-space: nowrap; }
.exp {
  width: 7px;
  height: 7px;
  flex: none;
  border: 1px solid #9a9a9a;
  background: linear-gradient(#333, #333) center / 3px 1px no-repeat #fff;
}
.legend { display: flex; align-items: center; gap: 4px; height: 15px; padding-left: 29px; font-size: 10px; }
.range { height: 14px; padding-left: 45px; font-size: 10px; }
.swatch { width: 13px; height: 9px; border: 1px solid #7c7c7c; }
.zone { width: 14px; height: 11px; border: 3px solid #f00; border-radius: 2px; margin-left: -1px; }
.aqua { background: #cefaf0; }
.blue { background: #bfdcfb; }
.mint { background: #d0fadc; }
.peach { background: #fbddd0; }
.dark { background: #0f6a1a; }

/* scroll bars */
.vbar { display: flex; flex-direction: column; align-items: center; width: 13px; padding: 5px 0; background: #eee; }
.thumb { display: flex; align-items: center; justify-content: center; border: 1px solid #999; border-radius: 1px; background: linear-gradient(90deg, #f4f4f5, #d2d2d6); }
.treethumb { width: 12px; flex: 0 0 58%; margin-top: 5px; }
.before, .after { flex: 248 1 0; }
.mapthumb { width: 12px; height: 16px; }
.mapv .after { flex-grow: 150; }
.hbar { display: flex; align-items: center; height: 13px; padding: 0 5px; background: #eee; }
.hthumb { flex: 92 1 0; height: 12px; background: linear-gradient(#f4f4f5, #c9c9ce); }
.hbar .before { flex-grow: 93; }
.hbar .after { flex-grow: 444; }

/* map */
.mapview { flex: 1; min-width: 0; display: grid; grid-template-columns: 1fr 13px; grid-template-rows: minmax(0, 1fr) 13px; border: 1px solid #8f919d; border-left-width: 0; }
.canvas { position: relative; overflow: hidden; min-width: 0; background: #cefaf0; }
.map { width: 100%; height: 100%; }
.corner { background: #eee; }
.maptools {
  position: absolute;
  top: 3px;
  left: 4px;
  display: flex;
  padding: 1px 2px;
  background: #f0f0f0;
  border: 1px solid #222;
  box-shadow: 1px 1px 0 #444;
}
.maptools button { width: 19px; height: 19px; display: flex; align-items: center; justify-content: center; }
.maptools .pressed { background: #fafafa; }

/* status bar */
.status { display: flex; align-items: center; height: 24px; padding: 0 3px 1px 8px; background: linear-gradient(#dadbe1, #c8c9d1); font-size: 10px; }
.combo { position: relative; margin-left: 2px; }
.combo select { appearance: none; display: block; width: 82px; height: 16px; padding: 0 4px; border: 1px solid #b5b6c0; border-radius: 0; background: #fff; line-height: 14px; }
.combo::after { content: ""; position: absolute; right: 4px; top: 6px; border: 3px solid transparent; border-top: 4px solid #111; border-bottom: 0; pointer-events: none; }
.coords { display: flex; gap: 10px; padding-left: 8px; border-left: 1px solid #b3b4be; }
.grip { align-self: flex-end; margin-left: 12px; }
```
